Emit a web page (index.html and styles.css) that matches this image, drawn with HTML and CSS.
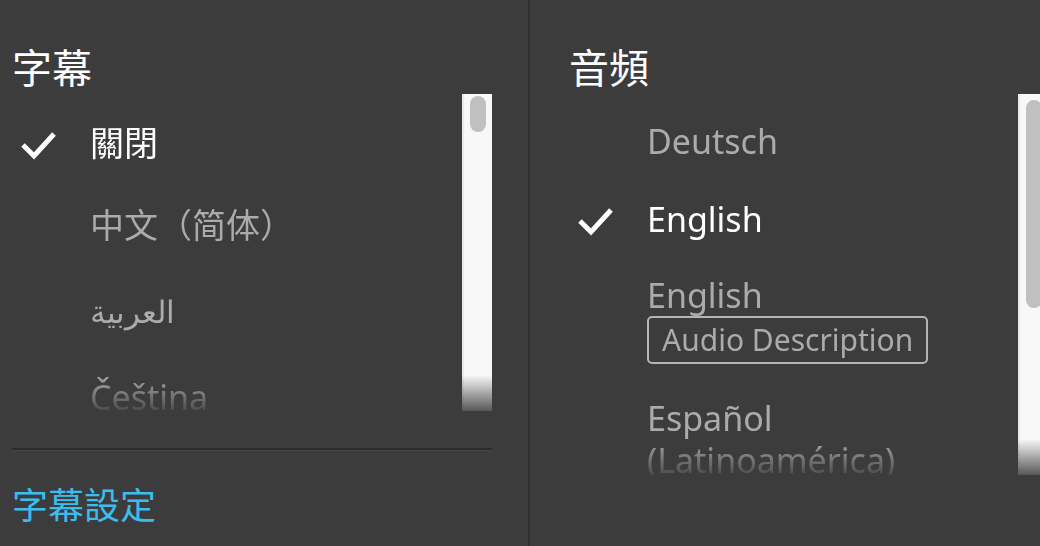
FILE: index.html
```html
<!DOCTYPE html>
<html lang="zh-Hant">
<head>
    <meta charset="UTF-8">
    <meta name="viewport" content="width=device-width, initial-scale=1.0">
    <title>字幕 / 音頻</title>
    <link rel="stylesheet" href="styles.css">
</head>
<body>

    <div class="panel panel-subs">
        <h2 class="panel-title">字幕</h2>
        <div class="list-wrap">
            <ul class="option-list">
                <li class="option selected">
                    <span class="check"><svg viewBox="0 0 36 30" width="36" height="30"><polyline points="3,15 14,26 34,4" fill="none" stroke="#fff" stroke-width="5"/></svg></span>
                    <span class="label">關閉</span>
                </li>
                <li class="option">
                    <span class="check"></span>
                    <span class="label">中文（简体）</span>
                </li>
                <li class="option tall">
                    <span class="check"></span>
                    <span class="label arabic" lang="ar">العربية</span>
                </li>
                <li class="option">
                    <span class="check"></span>
                    <span class="label">Čeština</span>
                </li>
            </ul>
            <div class="track"><div class="thumb thumb-short"></div></div>
        </div>
        <div class="footer">
            <a class="settings-link" href="#">字幕設定</a>
        </div>
    </div>

    <div class="panel panel-audio">
        <h2 class="panel-title">音頻</h2>
        <div class="list-wrap list-long">
            <ul class="option-list compact">
                <li class="option">
                    <span class="check"></span>
                    <span class="label">Deutsch</span>
                </li>
                <li class="option selected">
                    <span class="check"><svg viewBox="0 0 36 30" width="36" height="30"><polyline points="3,15 14,26 34,4" fill="none" stroke="#fff" stroke-width="5"/></svg></span>
                    <span class="label">English</span>
                </li>
                <li class="option with-badge">
                    <span class="check"></span>
                    <span class="label">English<br><span class="badge">Audio Description</span></span>
                </li>
                <li class="option">
                    <span class="check"></span>
                    <span class="label">Español<br>(Latinoamérica)</span>
                </li>
            </ul>
            <div class="track"><div class="thumb thumb-long"></div></div>
        </div>
    </div>

</body>
</html>
```

FILE: styles.css
```css
:root {
    --bg-color: #3c3c3c;
    --line-color: #2c2c2c;
    --muted-color: #ababab;
    --link-color: #3dbdee;
}

body {
    margin: 0;
    height: 546px;
    overflow: hidden;
    background-color: var(--bg-color);
    color: #fff;
    font-family: "Noto Sans", "Noto Sans CJK TC", sans-serif;
    display: flex;
}

.panel {
    flex: none;
    box-sizing: border-box;
    padding-top: 46px;
}

.panel-subs {
    width: 530px;
    padding-left: 12px;
    padding-right: 36px;
    border-right: 2px solid #303030;
}

.panel-audio {
    width: 518px;
    padding-left: 39px;
}

.panel-title {
    margin: 0 0 8px;
    font-family: "Noto Sans CJK TC", sans-serif;
    font-size: 40px;
    font-weight: normal;
    line-height: 40px;
}

.list-wrap {
    display: flex;
    height: 317px;
    overflow: hidden;
    -webkit-mask-image: linear-gradient(to bottom, #000 calc(100% - 36px), rgba(0, 0, 0, 0.15) 100%);
    mask-image: linear-gradient(to bottom, #000 calc(100% - 36px), rgba(0, 0, 0, 0.15) 100%);
}

.list-long {
    height: 381px;
}

.option-list {
    flex: 1;
    list-style: none;
    margin: 0;
    padding: 8px 0 0;
}

.option {
    display: flex;
    padding: 20px 0;
    font-size: 34px;
    line-height: 42px;
    color: var(--muted-color);
}

.option.tall {
    padding: 24px 0;
}

.compact .option {
    padding: 18px 0;
}

.compact .option.with-badge {
    padding: 16px 0 15px;
}

.option.selected {
    color: #fff;
}

.check {
    flex: none;
    width: 70px;
    padding-left: 8px;
    padding-top: 8px;
}

.check svg {
    display: block;
}

.label {
    white-space: nowrap;
}

.arabic {
    font-size: 31px;
}

.badge {
    display: inline-block;
    box-sizing: border-box;
    height: 48px;
    padding: 0 13px;
    border: 2px solid #b4b4b4;
    border-radius: 5px;
    font-size: 30px;
    line-height: 43px;
    vertical-align: top;
}

.track {
    flex: none;
    width: 30px;
    background: #f8f8f8;
    border-left: 2px solid #ebebeb;
    box-sizing: border-box;
    padding-left: 6px;
}

.thumb {
    width: 16px;
    background: #c0c0c0;
    border-radius: 8px;
}

.thumb-short {
    height: 36px;
    margin-top: 2px;
}

.thumb-long {
    height: 208px;
    margin-top: 6px;
}

.footer {
    margin-top: 37px;
    border-top: 2px solid var(--line-color);
    box-shadow: inset 0 1px 0 #474747;
    padding-top: 35px;
}

.settings-link {
    display: block;
    font-family: "Noto Sans CJK TC", sans-serif;
    font-size: 36px;
    line-height: 36px;
    color: var(--link-color);
    text-decoration: none;
}
```
